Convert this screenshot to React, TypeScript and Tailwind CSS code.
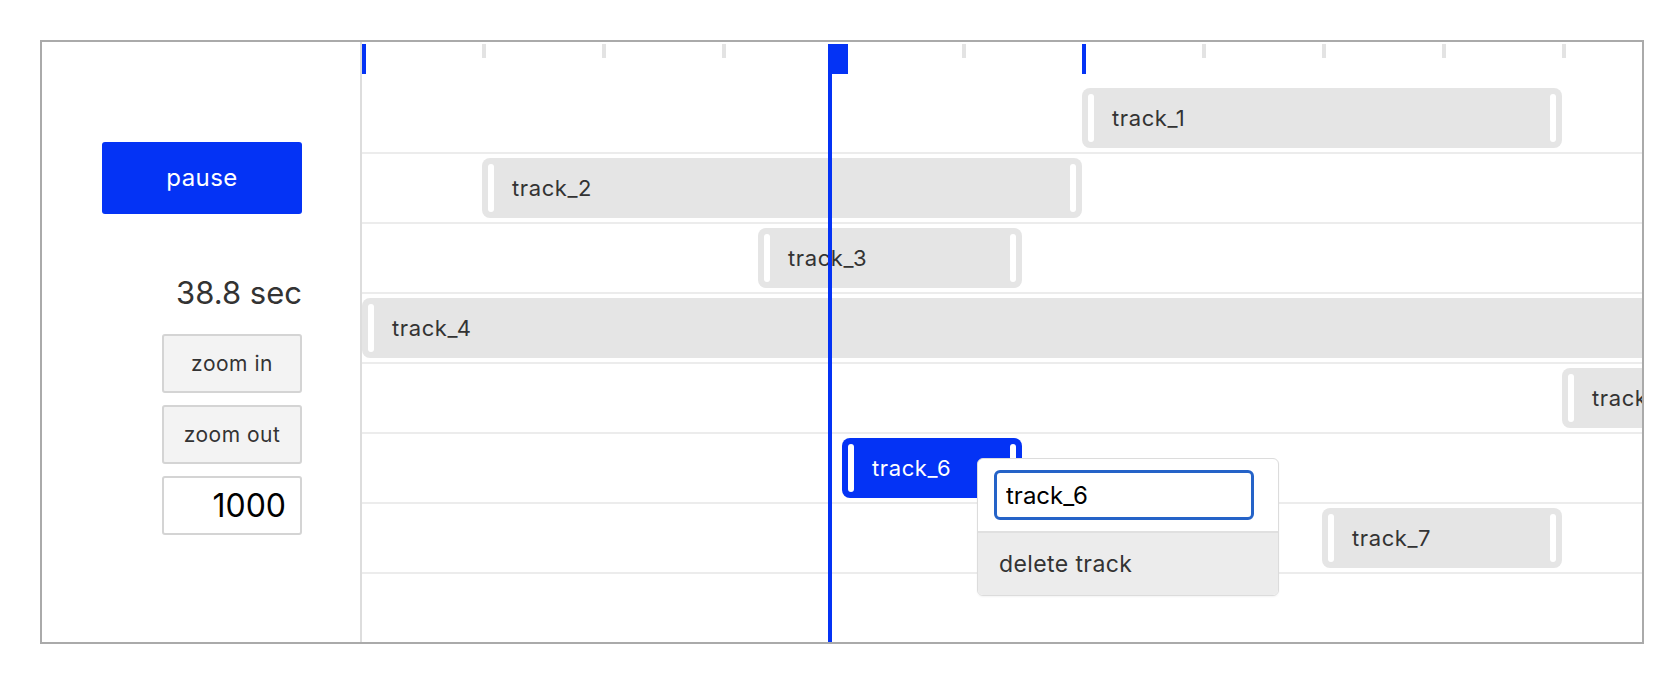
import { useState } from 'react';

const UNIT = 120;

const tracks = [
  { name: 'track_1', start: 720, end: 1200 },
  { name: 'track_2', start: 120, end: 720 },
  { name: 'track_3', start: 396, end: 660 },
  { name: 'track_4', start: 0, end: 1400 },
  { name: 'track_5', start: 1200, end: 1500 },
  { name: 'track_6', start: 480, end: 660, selected: true },
  { name: 'track_7', start: 960, end: 1200 },
];

const ticks = [1, 2, 3, 4, 5, 7, 8, 9, 10].map((i) => i * UNIT);
const marks = [0, 720];
const playhead = 466;

function Track({ t }: { t: (typeof tracks)[number] }) {
  const sel = !!t.selected;
  return (
    <div
      className={`absolute top-[4px] h-[60px] rounded-[8px] flex items-center ${sel ? 'bg-[#0433f5]' : 'bg-[#e5e5e5]'}`}
      style={{ left: t.start, width: t.end - t.start }}
    >
      <span className="absolute left-[6px] top-[6px] bottom-[6px] w-[6px] rounded-full bg-white" />
      <span className="absolute right-[6px] top-[6px] bottom-[6px] w-[6px] rounded-full bg-white" />
      <span className={`pl-[30px] text-[22px] tracking-[0.6px] whitespace-nowrap ${sel ? 'text-white' : 'text-[#333]'}`}>{t.name}</span>
    </div>
  );
}

export default function App() {
  const [name, setName] = useState('track_6');
  const [zoom, setZoom] = useState('1000');

  return (
    <div className="p-[40px] bg-white font-['Inter','Liberation_Sans',sans-serif]">
      <div className="flex w-[1604px] h-[604px] border-2 border-[#aaa]">
        {/* Controls */}
        <div className="w-[320px] shrink-0 border-r-2 border-[#ddd] flex flex-col items-end pr-[58px] pt-[100px]">
          <button className="w-[200px] h-[72px] rounded-[3px] bg-[#0433f5] text-white text-[24px] tracking-[0.4px]">pause</button>
          <p className="mt-[61px] text-[31px] leading-[36px] text-[#333]">38.8 sec</p>
          <div className="mt-[23px] flex flex-col gap-[12px]">
            <button className="w-[140px] h-[59px] rounded-[3px] border-2 border-[#d4d4d4] bg-[#f3f3f3] text-[21px] tracking-[0.5px] text-[#333]">
              zoom in
            </button>
            <button className="w-[140px] h-[59px] rounded-[3px] border-2 border-[#d4d4d4] bg-[#f3f3f3] text-[21px] tracking-[0.5px] text-[#333]">
              zoom out
            </button>
            <input
              value={zoom}
              onChange={(e) => setZoom(e.target.value)}
              className="w-[140px] h-[59px] rounded-[3px] border-2 border-[#d4d4d4] bg-white text-right pr-[14px] text-[32px] text-black outline-none"
            />
          </div>
        </div>

        {/* Timeline */}
        <div className="relative flex-1 overflow-hidden">
          <div className="relative h-[42px]">
            {ticks.map((x) => (
              <span key={x} className="absolute top-[2px] w-[4px] h-[14px] bg-[#e3e3e3]" style={{ left: x }} />
            ))}
            {marks.map((x) => (
              <span key={x} className="absolute top-[2px] w-[4px] h-[30px] bg-[#0433f5]" style={{ left: x }} />
            ))}
          </div>
          {tracks.map((t) => (
            <div key={t.name} className="relative h-[70px] border-b-2 border-[#ececec]">
              <Track t={t} />
            </div>
          ))}
          <div className="h-[68px]" />

          {/* Playhead */}
          <div className="absolute top-[2px] bottom-0 w-[4px] bg-[#0433f5]" style={{ left: playhead }} />
          <div className="absolute top-[2px] h-[30px] w-[20px] bg-[#0433f5]" style={{ left: playhead }} />

          {/* Track menu */}
          <div className="absolute left-[615px] top-[416px] w-[302px] rounded-[6px] border border-[#dcdcdc] bg-white overflow-hidden shadow-[0_1px_2px_rgba(0,0,0,0.05)]">
            <div className="py-[11px] pl-[16px] border-b-2 border-[#e0e0e0]">
              <input
                autoFocus
                value={name}
                onChange={(e) => setName(e.target.value)}
                className="w-[260px] h-[50px] rounded-[6px] border-[3px] border-[#2563c8] px-[9px] text-[24px] text-black caret-black outline-none"
              />
            </div>
            <div className="h-[62px] bg-[#ececec] flex items-center pl-[21px] text-[23px] tracking-[0.4px] text-[#333]">delete track</div>
          </div>
        </div>
      </div>
    </div>
  );
}
